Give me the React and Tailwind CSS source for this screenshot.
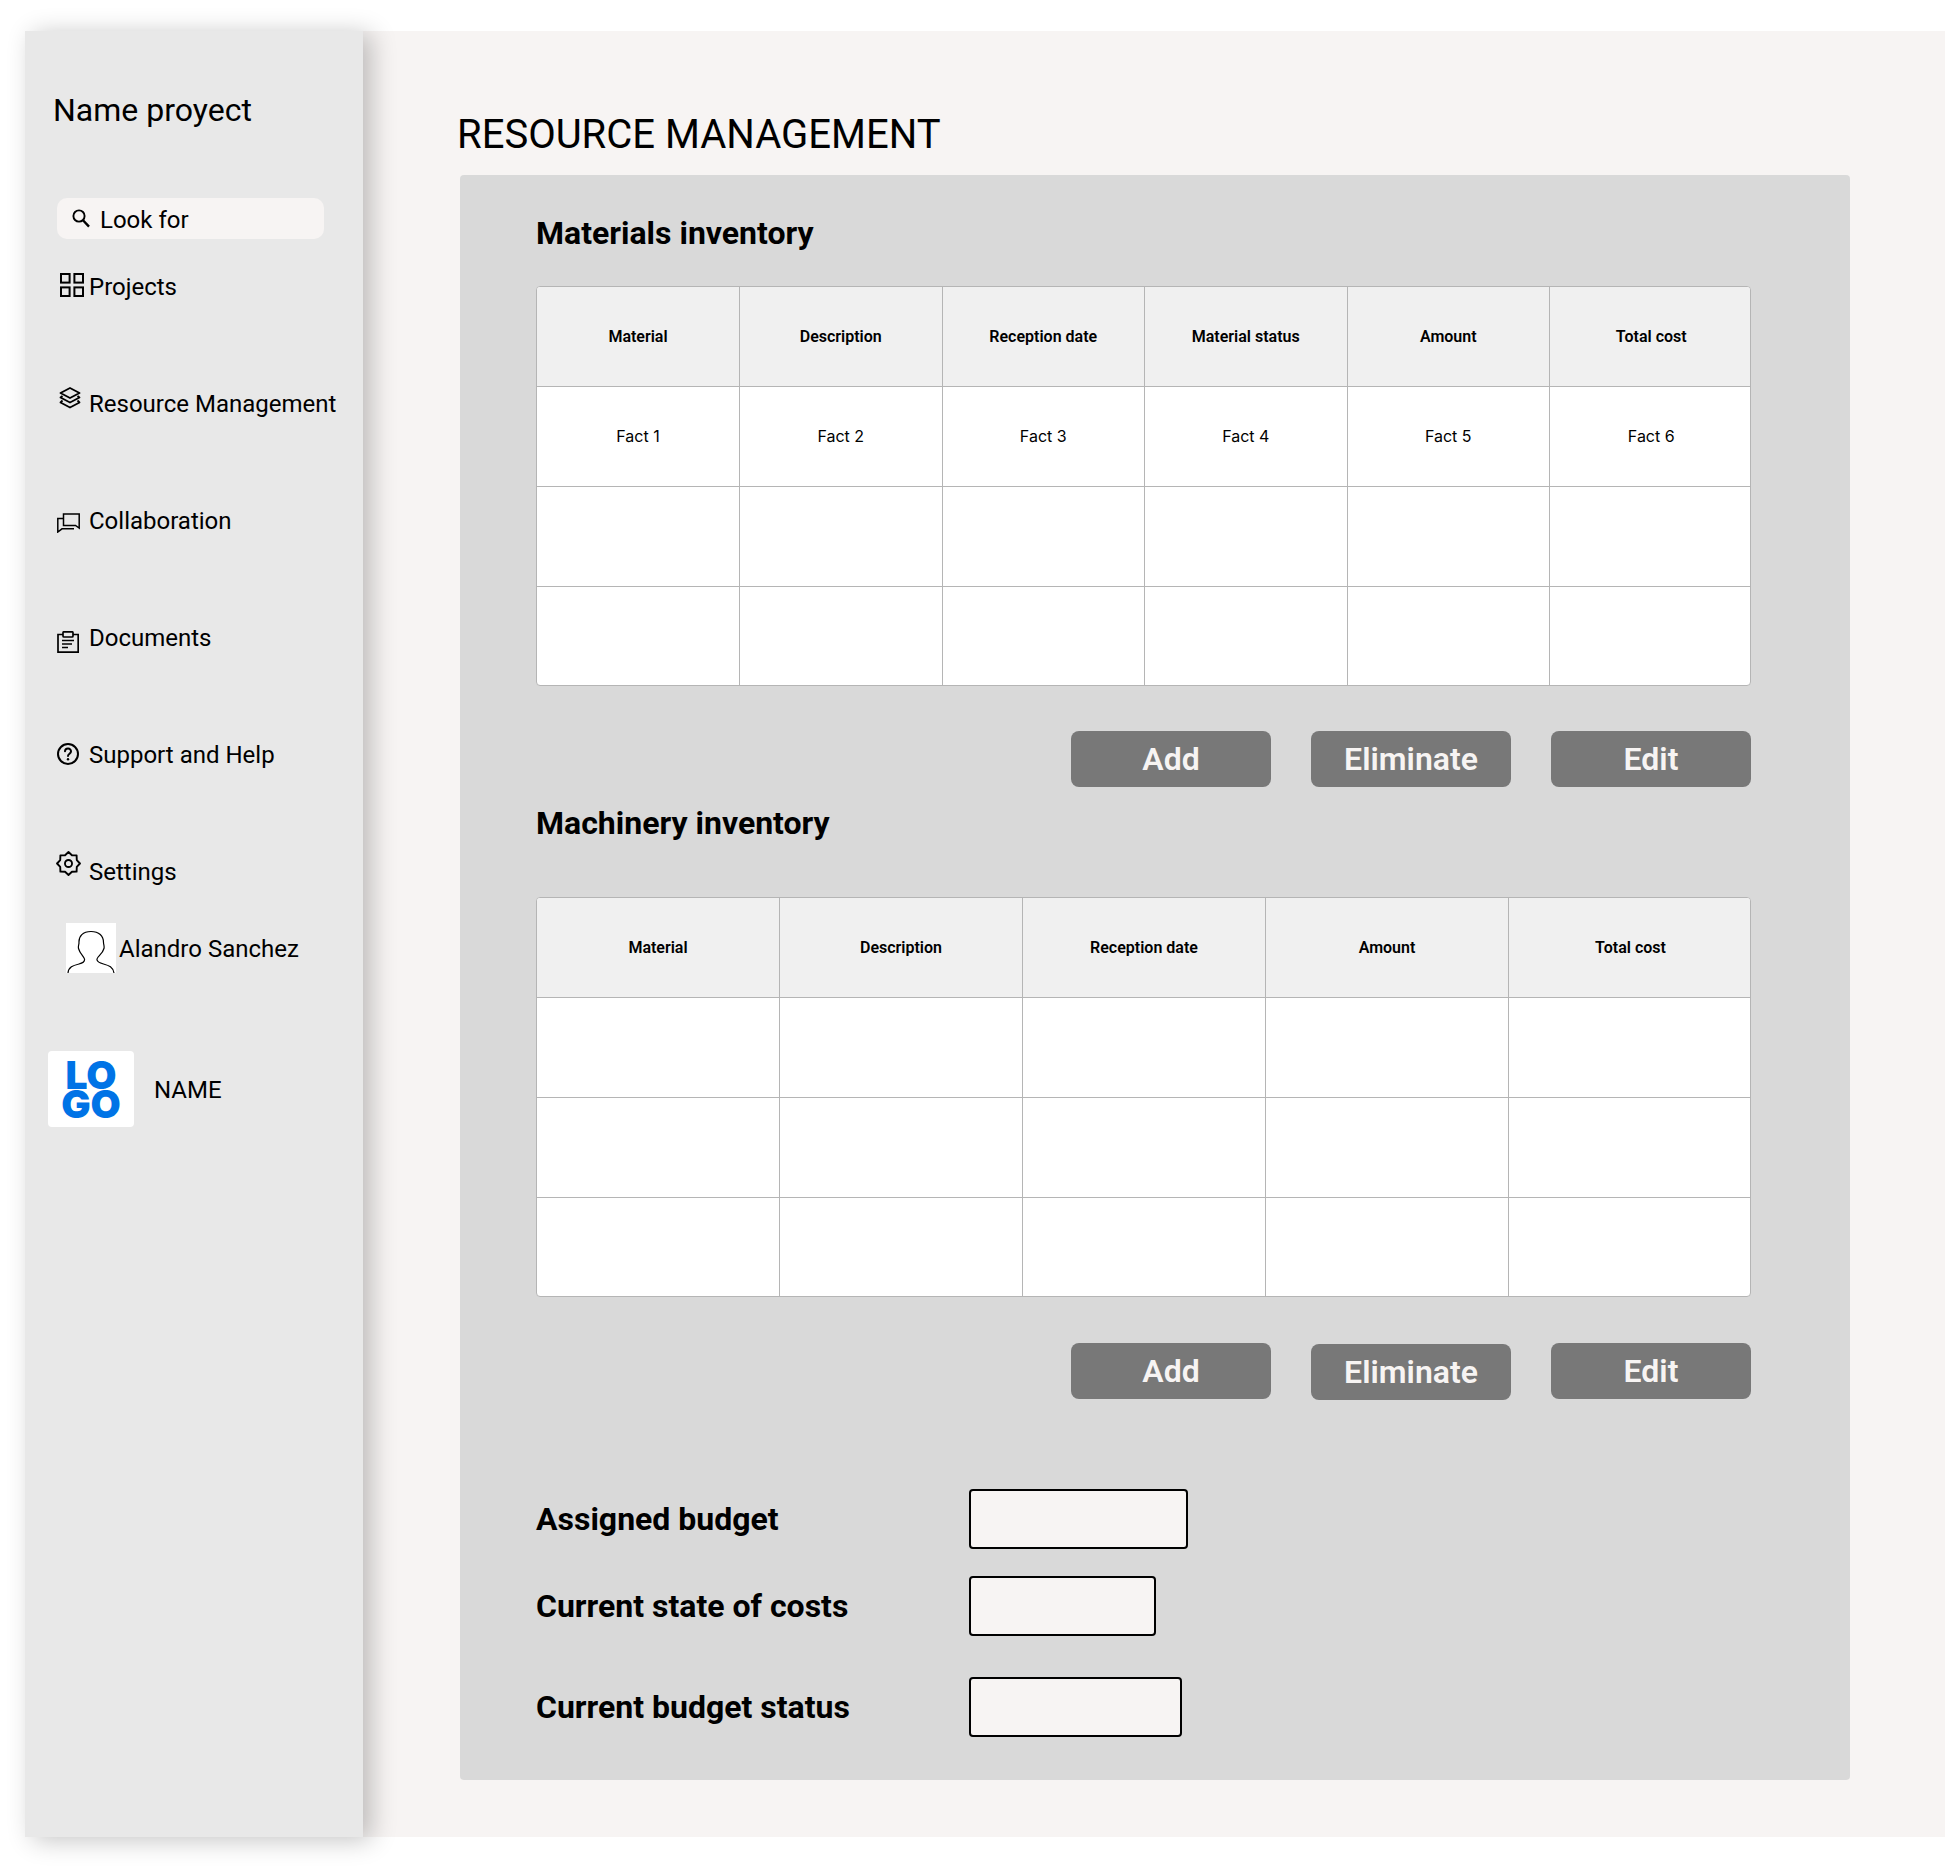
import React from "react";

const font = "font-['Roboto',sans-serif]";

// eight-point gear outline for the settings icon
const gearPoints = Array.from({ length: 16 }, (_, i) => {
  const r = i % 2 === 0 ? 11 : 8.6;
  const a = (i * Math.PI) / 8 - Math.PI / 2;
  return `${(12 + r * Math.cos(a)).toFixed(2)},${(12 + r * Math.sin(a)).toFixed(2)}`;
}).join(" ");

const SearchIcon = () => (
  <svg viewBox="0 0 18 19" className="w-[18px] h-[19px] shrink-0" fill="none" stroke="black">
    <circle cx="7" cy="7" r="5.6" strokeWidth="1.9" />
    <path d="M11 11.2 L17 17.6" strokeWidth="2.4" />
  </svg>
);

const GridIcon = () => (
  <svg viewBox="0 0 24 24" className="w-6 h-6 ml-[3px] mb-[3px]" fill="none" stroke="black" strokeWidth="2">
    <rect x="1" y="1" width="8.6" height="8.6" />
    <rect x="14.4" y="1" width="8.6" height="8.6" />
    <rect x="1" y="14.4" width="8.6" height="8.6" />
    <rect x="14.4" y="14.4" width="8.6" height="8.6" />
  </svg>
);

const LayersIcon = () => (
  <svg viewBox="0 0 22 22" className="w-[22px] h-[22px] ml-[2px] mb-[10px]" fill="none" stroke="black" strokeWidth="1.8" strokeLinejoin="round">
    <path d="M11 1 L20.5 6 L11 11 L1.5 6 Z" />
    <path d="M3.5 9 L1.5 10.5 L11 15.5 L20.5 10.5 L18.5 9" />
    <path d="M3.5 13.5 L1.5 15.5 L11 20.5 L20.5 15.5 L18.5 13.5" />
  </svg>
);

const ChatIcon = () => (
  <svg viewBox="0 0 23 20" className="w-[23px] h-5 mt-[6px]" fill="none" stroke="black" strokeWidth="1.5">
    <path d="M6.5 12.5 V1 H22.2 V15 L18.5 12.5 Z" />
    <path d="M6.5 5.5 H0.8 V19 L5 15.8 H17" />
  </svg>
);

const ClipboardIcon = () => (
  <svg viewBox="0 0 22 22" className="w-[22px] h-[22px] mt-[10px]" fill="none" stroke="black" strokeWidth="1.7">
    <path d="M6 3.5 H1 V21.2 H21.2 V3.5 H16" />
    <rect x="6" y="0.8" width="10" height="5.2" rx="1" />
    <path d="M5 9.5 H17 M5 13 H15 M5 16.5 H11" />
  </svg>
);

const HelpIcon = () => (
  <svg viewBox="0 0 22 22" className="w-[22px] h-[22px]" fill="none" stroke="black" strokeWidth="2" strokeLinecap="round">
    <circle cx="11" cy="11" r="10" />
    <path d="M8 8.3 A3 3 0 0 1 14 8.5 C14 10.6 11 10.8 11 13" />
    <path d="M11 16.2 V16.3" strokeWidth="2.4" />
  </svg>
);

const GearIcon = () => (
  <svg viewBox="0 0 24 24" className="w-[25px] h-[25px] -ml-px mb-[16px]" fill="none" stroke="black" strokeWidth="1.8" strokeLinejoin="round">
    <polygon points={gearPoints} />
    <circle cx="12" cy="12" r="3.4" />
  </svg>
);

const AvatarIcon = () => (
  <svg viewBox="0 0 50 50" className="w-[50px] h-[50px] bg-white shrink-0" fill="none" stroke="black" strokeWidth="1.2">
    <path d="M2 50 C2.5 44 7 42.5 13 41 C17.5 39.8 19 38.5 18.5 36 C18 33.5 14 31 12.5 25.5 C12 23 13 21.5 13 20 C12.5 13 17 8.5 25 8.5 C33 8.5 37.5 13 37.5 19.5 C37.5 21.5 38.5 23 38 25.5 C36.5 31 31.5 33.5 31 36 C30.5 38.5 33 39.8 37.5 41 C43 42.5 47 44 48 50" />
  </svg>
);

const navItems = [
  { label: "Projects", icon: <GridIcon /> },
  { label: "Resource Management", icon: <LayersIcon /> },
  { label: "Collaboration", icon: <ChatIcon /> },
  { label: "Documents", icon: <ClipboardIcon /> },
  { label: "Support and Help", icon: <HelpIcon /> },
  { label: "Settings", icon: <GearIcon /> },
];

const Sidebar = () => (
  <aside className="relative z-10 ml-[25px] w-[338px] shrink-0 bg-[#e8e8e8] pt-[59px] shadow-[8px_3px_24px_rgba(0,0,0,0.24)]">
    <div className="ml-[28px] h-10 text-[32px] leading-10 text-black">Name proyect</div>

    <div className="ml-[32px] mt-[68px] flex h-[41px] w-[267px] items-center rounded-[10px] bg-[#f7f4f3] pl-[15px]">
      <SearchIcon />
      <span className="ml-[10px] mt-[2px] text-2xl text-black">Look for</span>
    </div>

    <nav className="mt-[27px] flex flex-col gap-[77px] pl-[32px]">
      {navItems.map((item) => (
        <div key={item.label} className="flex h-10 items-center whitespace-nowrap text-2xl text-black">
          <div className="flex w-[32px] shrink-0 items-center">{item.icon}</div>
          <span className="mt-px">{item.label}</span>
        </div>
      ))}
    </nav>

    <div className="ml-[41px] mt-[32px] flex items-center gap-[3px]">
      <AvatarIcon />
      <span className="mt-px text-2xl text-black">Alandro Sanchez</span>
    </div>

    <div className="ml-[23px] mt-[78px] flex items-center gap-5">
      <div className="flex h-[76px] w-[86px] items-center justify-center rounded-[4px] bg-white text-center font-['Inter',sans-serif] text-[39px] font-black leading-[29px] text-[#0073e6]">
        <span>
          LO
          <br />
          GO
        </span>
      </div>
      <span className="mt-px text-2xl text-black">NAME</span>
    </div>
  </aside>
);

const InventoryTable = ({ columns, gridClass, rows }) => (
  <div className="h-[400px] overflow-hidden rounded-[4px] border border-[#b5b5b5] bg-white">
    <div className={`grid ${gridClass}`}>
      {columns.map((col, i) => (
        <div
          key={col}
          className={`flex h-[100px] items-center justify-center border-b border-[#b5b5b5] bg-[#f0f0f0] text-base font-semibold text-black ${
            i < columns.length - 1 ? "border-r" : ""
          }`}
        >
          {col}
        </div>
      ))}
      {rows.flat().map((cell, i) => (
        <div
          key={i}
          className={`flex h-[100px] items-center justify-center border-b border-[#b5b5b5] pb-[2px] font-['Inter',sans-serif] text-base text-black ${
            (i + 1) % columns.length !== 0 ? "border-r" : ""
          }`}
        >
          {cell}
        </div>
      ))}
    </div>
  </div>
);

const ActionButton = ({ children, className = "" }) => (
  <button className={`flex h-14 w-[200px] items-center justify-center rounded-lg bg-[#787878] text-[32px] font-semibold text-[#f7f4f3] ${className}`}>
    {children}
  </button>
);

const BudgetRow = ({ label, inputClass, className = "" }) => (
  <div className={`flex items-center ${className}`}>
    <div className="w-[433px] text-[32px] font-bold leading-10 text-black">{label}</div>
    <div className={`h-[60px] rounded-[4px] border-2 border-black bg-[#f7f4f3] ${inputClass}`} />
  </div>
);

const materialCols = ["Material", "Description", "Reception date", "Material status", "Amount", "Total cost"];
const machineryCols = ["Material", "Description", "Reception date", "Amount", "Total cost"];

const materialRows = [
  ["Fact 1", "Fact 2", "Fact 3", "Fact 4", "Fact 5", "Fact 6"],
  ["", "", "", "", "", ""],
  ["", "", "", "", "", ""],
];
const machineryRows = [
  ["", "", "", "", ""],
  ["", "", "", "", ""],
  ["", "", "", "", ""],
];

export default function App() {
  return (
    <div className={`min-h-[1870px] bg-white pt-[31px] ${font}`}>
      <div className="flex h-[1806px]">
        <Sidebar />
        <main className="flex-1 bg-[#f7f4f3] pt-[80px]">
          <h1 className="ml-[94px] h-12 text-[40px] leading-[48px] text-black">RESOURCE MANAGEMENT</h1>

          <section className="ml-[97px] mt-[16px] h-[1605px] w-[1390px] rounded-[4px] bg-[#d9d9d9] pl-[76px] pr-[99px] pt-[38px]">
            <h2 className="h-10 text-[32px] font-bold leading-10 text-black">Materials inventory</h2>
            <div className="mt-[33px]">
              <InventoryTable columns={materialCols} gridClass="grid-cols-[203px_repeat(5,202.5px)]" rows={materialRows} />
            </div>
            <div className="mt-[45px] flex justify-end gap-10">
              <ActionButton>Add</ActionButton>
              <ActionButton>Eliminate</ActionButton>
              <ActionButton>Edit</ActionButton>
            </div>

            <h2 className="mt-4 h-10 text-[32px] font-bold leading-10 text-black">Machinery inventory</h2>
            <div className="mt-[54px]">
              <InventoryTable columns={machineryCols} gridClass="grid-cols-[repeat(5,243px)]" rows={machineryRows} />
            </div>
            <div className="mt-[46px] flex items-start justify-end gap-10">
              <ActionButton>Add</ActionButton>
              <ActionButton className="mt-px">Eliminate</ActionButton>
              <ActionButton>Edit</ActionButton>
            </div>

            <BudgetRow label="Assigned budget" inputClass="w-[219px]" className="mt-[89px]" />
            <BudgetRow label="Current state of costs" inputClass="w-[187px]" className="mt-[27px]" />
            <BudgetRow label="Current budget status" inputClass="w-[213px]" className="mt-[41px]" />
          </section>
        </main>
      </div>
    </div>
  );
}
